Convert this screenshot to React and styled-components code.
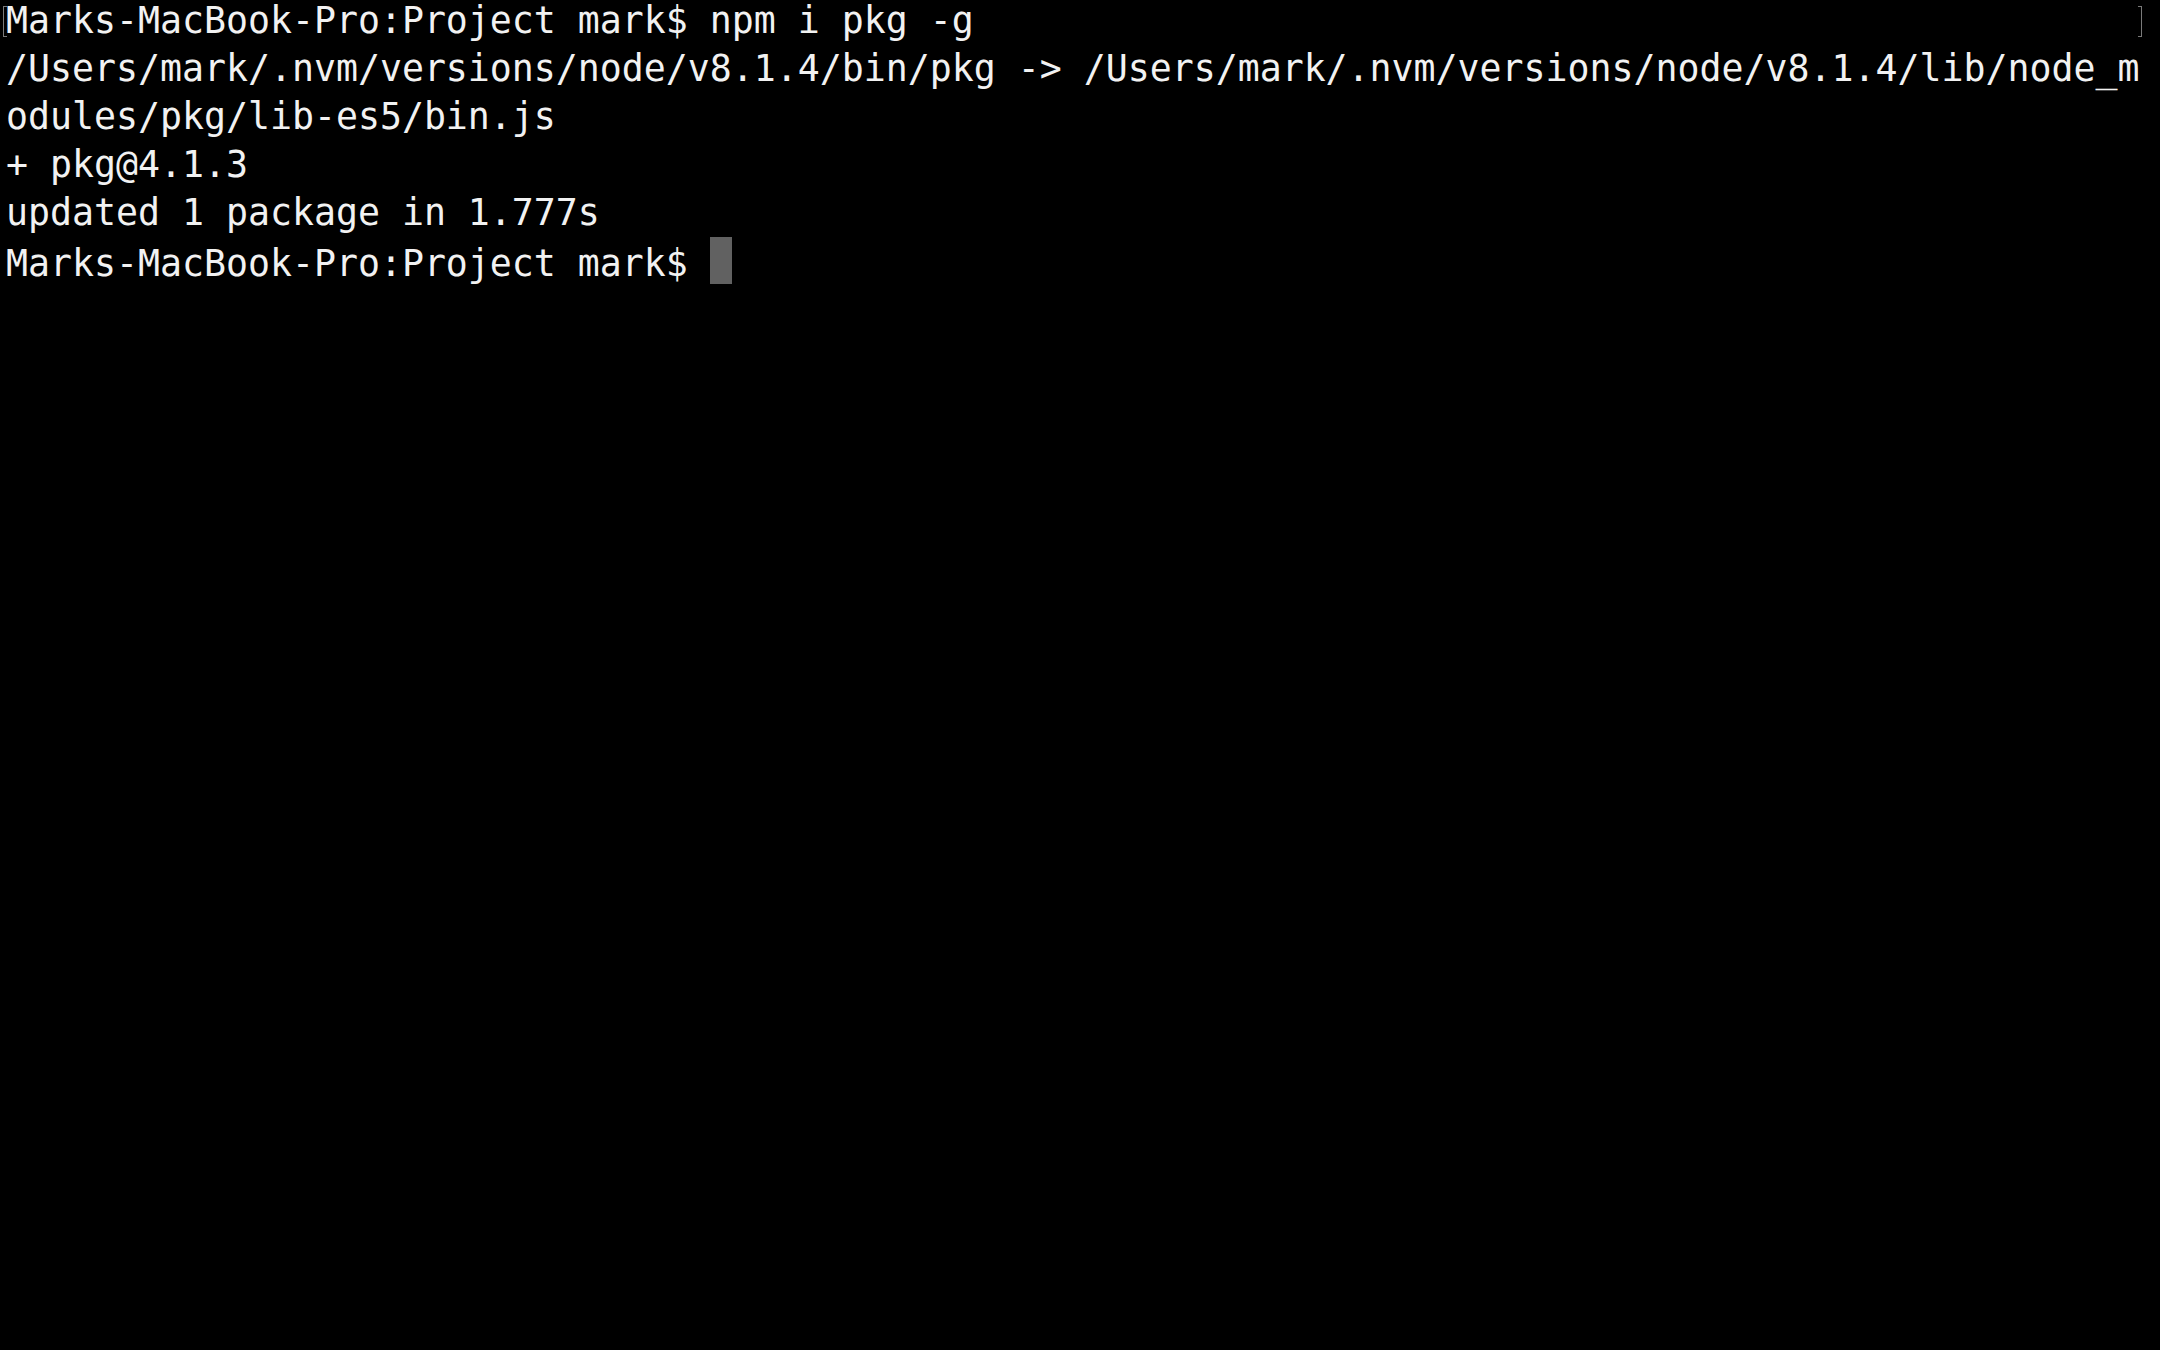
import styled, { createGlobalStyle } from 'styled-components';

const GlobalStyle = createGlobalStyle`
    html, body {
        margin: 0;
        padding: 0;
        background: #000;
    }
`

const Screen = styled.div`
    position: relative;
    width: 2160px;
    height: 1350px;
    background: #000;
    overflow: hidden;
`

const Output = styled.div`
    margin-top: -3px;
    padding-left: 6px;
    font-family: "DejaVu Sans Mono", "Liberation Mono", monospace;
    font-size: 36.54px;
    line-height: 48.1px;
    color: #f2f2f2;
    white-space: pre;
`

const Line = styled.div`
    height: 48.1px;
`

const Cursor = styled.span`
    display: inline-block;
    width: 22px;
    height: 47px;
    background: #616161;
    vertical-align: -8px;
`

// Terminal.app line marks at the edges of the first row
const Mark = styled.span`
    position: absolute;
    top: 6px;
    width: 3px;
    height: 29px;
    border: 1px solid #7a7a7a;
    ${({ side }) => side === 'left'
        ? 'left: 3px; border-right: none;'
        : 'left: 2138px; border-left: none;'}
`

const lines = [
    'Marks-MacBook-Pro:Project mark$ npm i pkg -g',
    '/Users/mark/.nvm/versions/node/v8.1.4/bin/pkg -> /Users/mark/.nvm/versions/node/v8.1.4/lib/node_m',
    'odules/pkg/lib-es5/bin.js',
    '+ pkg@4.1.3',
    'updated 1 package in 1.777s',
]

const App = () => {
    return (
        <Screen>
            <GlobalStyle />
            <Mark side="left" />
            <Mark side="right" />
            <Output>
                {lines.map((text, i) => (
                    <Line key={i}>{text}</Line>
                ))}
                <Line>
                    Marks-MacBook-Pro:Project mark$ <Cursor />
                </Line>
            </Output>
        </Screen>
    );
};

export default App;
